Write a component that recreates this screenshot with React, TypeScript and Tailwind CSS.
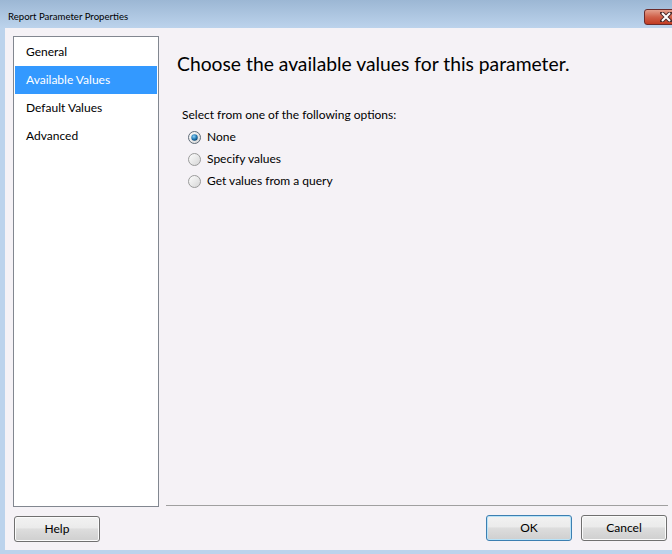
function Radio({ checked }: { checked?: boolean }) {
  return (
    <svg width="13" height="13" viewBox="0 0 13 13" className="shrink-0">
      <defs>
        <linearGradient id={checked ? "rc" : "ru"} x1="0" y1="0" x2="1" y2="1">
          <stop offset="0" stopColor="#ffffff" />
          <stop offset="1" stopColor="#d4d4d4" />
        </linearGradient>
        <radialGradient id="dot" cx="0.4" cy="0.35" r="0.7">
          <stop offset="0" stopColor="#8fd1f4" />
          <stop offset="0.6" stopColor="#1f78b4" />
          <stop offset="1" stopColor="#0b3d66" />
        </radialGradient>
      </defs>
      <circle cx="6.5" cy="6.5" r="6" fill={`url(#${checked ? "rc" : "ru"})`} stroke={checked ? "#5f6b78" : "#9a9a9a"} strokeWidth="1" />
      {checked && <circle cx="6.5" cy="6.5" r="3.2" fill="url(#dot)" />}
    </svg>
  )
}

function Btn({ label, primary }: { label: string; primary?: boolean }) {
  return (
    <button
      className={
        "w-[86px] h-[26px] rounded-[3px] border text-[12px] text-black bg-[linear-gradient(#f2f2f2_0%,#ebebeb_45%,#dddddd_50%,#cfcfcf_100%)] " +
        (primary ? "border-[#3c7fb1] shadow-[inset_0_0_0_1px_#b9e3f8]" : "border-[#707070] shadow-[inset_0_0_0_1px_#fbfbfb]")
      }
    >
      {label}
    </button>
  )
}

export default function App() {
  const items = ["General", "Available Values", "Default Values", "Advanced"]
  return (
    <div className="w-[672px] h-[554px] overflow-hidden bg-[#bcd3ec] flex flex-col font-['Lato','Liberation_Sans',sans-serif]">
      {/* title bar */}
      <div className="h-[28px] shrink-0 flex items-start bg-[linear-gradient(#9cb7d4,#bcd3ec)]">
        <span className="pl-[8px] pt-[9px] text-[9.6px] leading-[16px] text-black">Report Parameter Properties</span>
        <div className="ml-auto -mr-[15px] mt-[9px] w-[43px] h-[16px] rounded-[3px] border border-[#6b2b2a] bg-[linear-gradient(#e4a08d,#d0614a_50%,#c13b22)] flex items-center justify-center">
          <svg width="12" height="10" viewBox="0 0 12 10">
            <path d="M2 1 L10 9 M10 1 L2 9" stroke="#4a2a2a" strokeWidth="4" strokeLinecap="square" />
            <path d="M2 1 L10 9 M10 1 L2 9" stroke="#ffffff" strokeWidth="2" />
          </svg>
        </div>
      </div>

      {/* body */}
      <div className="flex-1 ml-[5px] mb-[4px] bg-[#f5f2f6] flex flex-col pt-[8px] pl-[8px] pr-[4px]">
        <div className="flex h-[471px]">
          <div className="w-[146px] shrink-0 bg-white border border-[#828790] p-[1px]">
            {items.map((t, i) => (
              <div
                key={t}
                className={"h-[28px] flex items-center pl-[11px] text-[12px] " + (i === 1 ? "bg-[#3399ff] text-white" : "text-black")}
              >
                {t}
              </div>
            ))}
          </div>
          <div className="flex-1 ml-[7px] flex flex-col">
            <div className="flex-1 flex flex-col">
              <h1 className="pl-[11px] pt-[16px] text-[19.3px] leading-[24px] text-black">Choose the available values for this parameter.</h1>
              <p className="pl-[16px] mt-[31px] text-[12px] leading-[16px] text-black">Select from one of the following options:</p>
              <div className="mt-[3px] pl-[22px] flex flex-col">
                {["None", "Specify values", "Get values from a query"].map((t, i) => (
                  <label key={t} className="h-[22px] flex items-center gap-[6px] text-[12px] text-black">
                    <Radio checked={i === 0} />
                    {t}
                  </label>
                ))}
              </div>
            </div>
            <div className="h-px bg-[#a0a0a0] mb-[1px]" />
          </div>
        </div>
        <div className="mt-[8px] flex items-start">
          <div className="pl-[1px]">
            <Btn label="Help" />
          </div>
          <div className="ml-auto flex gap-[9px] pr-[1px]">
            <Btn label="OK" primary />
            <Btn label="Cancel" />
          </div>
        </div>
      </div>
    </div>
  )
}
